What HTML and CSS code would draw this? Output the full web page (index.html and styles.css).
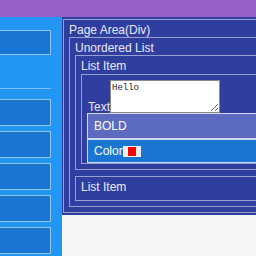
FILE: index.html
```html
<!DOCTYPE html>
<html>
<head>
<meta charset="utf-8">
<link rel="stylesheet" href="styles.css">
</head>
<body>
<div class="app">
  <header class="topbar"></header>
  <div class="layout">
    <aside class="sidebar">
      <div class="side-item first"></div>
      <div class="side-divider"></div>
      <div class="side-item"></div>
      <div class="side-item"></div>
      <div class="side-item"></div>
      <div class="side-item"></div>
      <div class="side-item"></div>
    </aside>
    <main class="main">
      <div class="box page">
        <div class="title">Page Area(Div)</div>
        <div class="box list">
          <div class="title">Unordered List</div>
          <div class="box item">
            <div class="title item-title">List Item</div>
            <div class="box text-box">
              <div class="field">
                <label class="field-label">Text</label>
                <textarea class="field-input">Hello</textarea>
              </div>
              <div class="prop bold">BOLD</div>
              <div class="prop color">Color<span class="swatch"></span></div>
            </div>
          </div>
          <div class="box item second">
            <div class="title">List Item</div>
          </div>
        </div>
      </div>
    </main>
  </div>
</div>
</body>
</html>
```
FILE: styles.css
```css
html, body {
  margin: 0;
  height: 256px;
  overflow: hidden;
}
body {
  background: #f5f5f5;
  font-family: "Liberation Sans Narrow", "Liberation Sans", Arial, sans-serif;
  font-size: 12px;
  line-height: 13px;
  color: #e8eaf6;
}
.topbar {
  height: 17px;
  background: #985fc8;
}
.layout {
  display: flex;
  align-items: flex-start;
  height: 239px;
}
.sidebar {
  flex: none;
  width: 62px;
  height: 239px;
  box-sizing: border-box;
  padding-top: 13px;
  background: #2196f3;
}
.side-item {
  box-sizing: border-box;
  width: 52px;
  height: 27px;
  margin: 0 0 5px -1px;
  border: 1px solid #8fc4f5;
  background: #1976d2;
}
.side-item.first {
  height: 25px;
  margin-bottom: 0;
}
.side-divider {
  width: 51px;
  height: 1px;
  margin: 33px 0 10px;
  background: #7fbcf5;
}
.main {
  flex: none;
  width: 420px;
  padding: 2px 0 2px 1px;
  background: #303f9f;
}
.box {
  border: 1px solid rgba(255, 255, 255, 0.5);
  padding: 4px 5px 5px;
}
.title {
  height: 13px;
  white-space: nowrap;
}
.item-title {
  height: 14px;
}
.item.second {
  margin-top: 6px;
  padding-bottom: 6px;
}
.text-box {
  padding: 5px 5px 0;
}
.field {
  display: flex;
  align-items: flex-end;
}
.field-label {
  padding-left: 1px;
  margin-right: 0;
  font-size: 12px;
  line-height: 11px;
}
.field-input {
  box-sizing: border-box;
  width: 110px;
  height: 33px;
  margin: 0;
  padding: 2px 1px;
  border: 1px solid #8a8a8a;
  background: #fff;
  color: #222;
  font-family: "Liberation Mono", monospace;
  font-size: 9px;
  line-height: 10px;
  resize: both;
}
.prop {
  display: flex;
  align-items: center;
  padding-left: 6px;
  border: 1px solid rgba(255, 255, 255, 0.75);
  color: #fff;
}
.bold {
  height: 24px;
  background: #5c6bc0;
}
.color {
  height: 22px;
  background: #1976d2;
}
.swatch {
  display: inline-block;
  width: 8px;
  height: 9px;
  border-style: solid;
  border-color: #eeeeee;
  border-width: 1px 5px 1px 5px;
  background: #ff0000;
}
```
